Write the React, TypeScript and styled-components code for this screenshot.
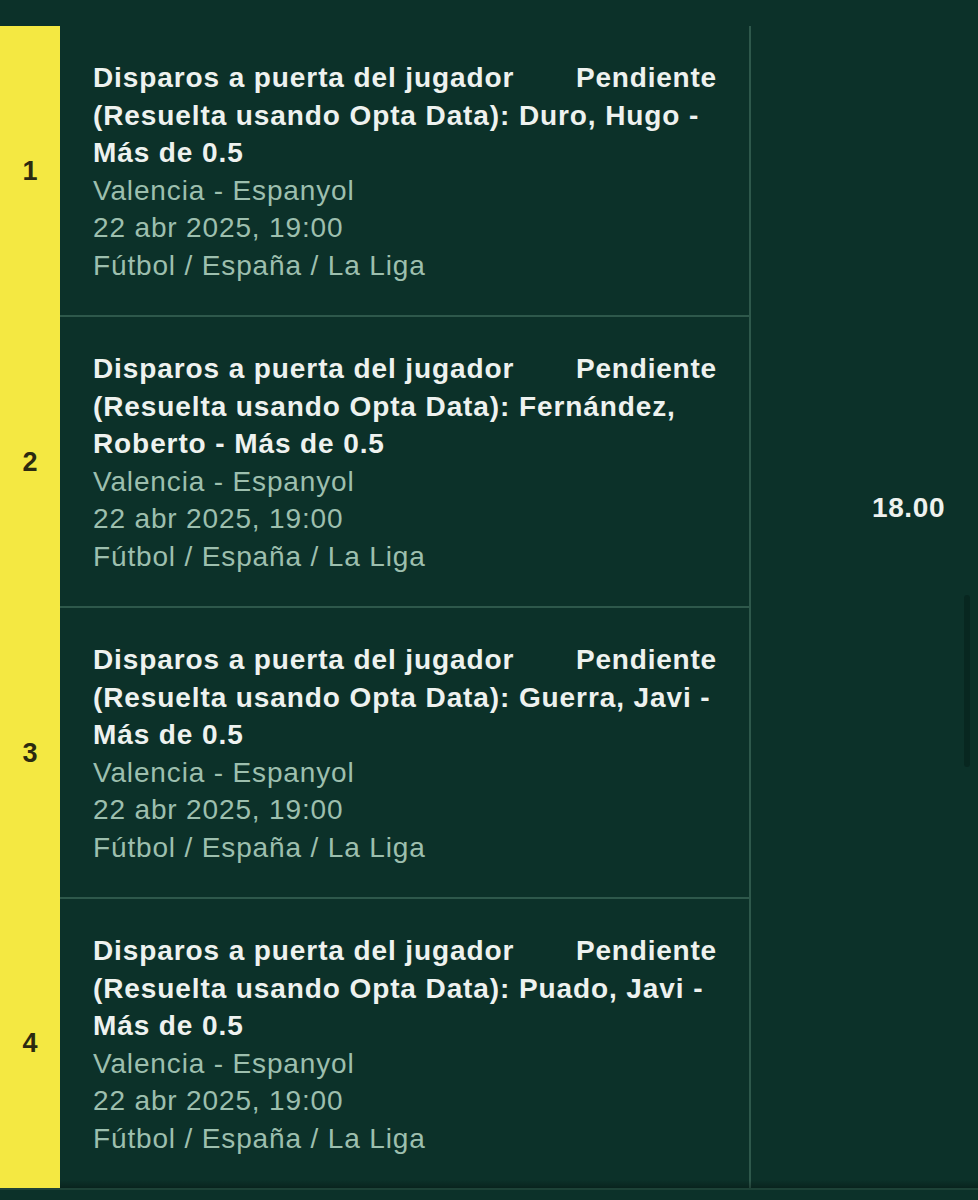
import styled, { createGlobalStyle } from "styled-components";

const GlobalStyle = createGlobalStyle`
    html, body {
        margin: 0;
        padding: 0;
        background-color: #0c3129;
        font-family: "Liberation Sans", Arial, Helvetica, sans-serif;
    }
`;

const Page = styled.div`
    position: relative;
    width: 978px;
    height: 1200px;
    overflow: hidden;
    background-color: #0c3129;
    padding-top: 26px;
    box-sizing: border-box;
`;

const Table = styled.div`
    position: relative;
    display: flex;
    align-items: stretch;
    border-bottom: 2px solid #1d4237;

    &::after {
        content: "";
        position: absolute;
        left: 0;
        right: 0;
        bottom: 0;
        height: 8px;
        background: linear-gradient(to bottom, rgba(0, 0, 0, 0), rgba(0, 0, 0, 0.28));
        pointer-events: none;
    }
`;

const Selections = styled.div`
    width: 749px;
    display: flex;
    flex-direction: column;
    border-right: 2px solid #2e584b;
`;

const Row = styled.div<{ $last?: boolean }>`
    display: flex;
    align-items: stretch;
    border-bottom: ${(p) => (p.$last ? "none" : "2px solid #2e584b")};
`;

const Index = styled.div<{ $last?: boolean }>`
    width: 60px;
    flex: 0 0 60px;
    background-color: #f4e842;
    display: flex;
    align-items: center;
    justify-content: center;
    font-size: 27px;
    font-weight: bold;
    color: #2c2a10;
    margin-bottom: ${(p) => (p.$last ? "0" : "-2px")};
    position: relative;
    z-index: 1;
`;

const Details = styled.div`
    flex: 1;
    padding: 33px 32px 31px 33px;
    line-height: 37.5px;
    font-size: 28px;
`;

const Market = styled.div`
    font-weight: bold;
    color: #eef2ef;
    letter-spacing: 0.9px;
`;

const Status = styled.span`
    float: right;
    margin-left: 24px;
    letter-spacing: 0.8px;
`;

const Meta = styled.div`
    color: #9dbfae;
    letter-spacing: 0.85px;
`;

const OddsColumn = styled.div`
    flex: 1;
    padding: 463px 0 0 121px;
    font-size: 28px;
    line-height: 37.5px;
    font-weight: bold;
    color: #eef2ef;
    letter-spacing: 0.6px;
`;

const ScrollThumb = styled.div`
    position: absolute;
    left: 964px;
    top: 595px;
    width: 6px;
    height: 172px;
    border-radius: 3px;
    background-color: #082720;
`;

const selections = [
    "Duro, Hugo",
    "Fernández, Roberto",
    "Guerra, Javi",
    "Puado, Javi",
];

export default function App() {
    return (
        <>
            <GlobalStyle />
            <Page>
                <Table>
                    <Selections>
                        {selections.map((player, i) => (
                            <Row key={player} $last={i === selections.length - 1}>
                                <Index $last={i === selections.length - 1}>{i + 1}</Index>
                                <Details>
                                    <Market>
                                        <Status>Pendiente</Status>
                                        Disparos a puerta del jugador (Resuelta usando Opta Data): {player} - Más de 0.5
                                    </Market>
                                    <Meta>Valencia - Espanyol</Meta>
                                    <Meta>22 abr 2025, 19:00</Meta>
                                    <Meta>Fútbol / España / La Liga</Meta>
                                </Details>
                            </Row>
                        ))}
                    </Selections>
                    <OddsColumn>18.00</OddsColumn>
                </Table>
                <ScrollThumb />
            </Page>
        </>
    );
}
